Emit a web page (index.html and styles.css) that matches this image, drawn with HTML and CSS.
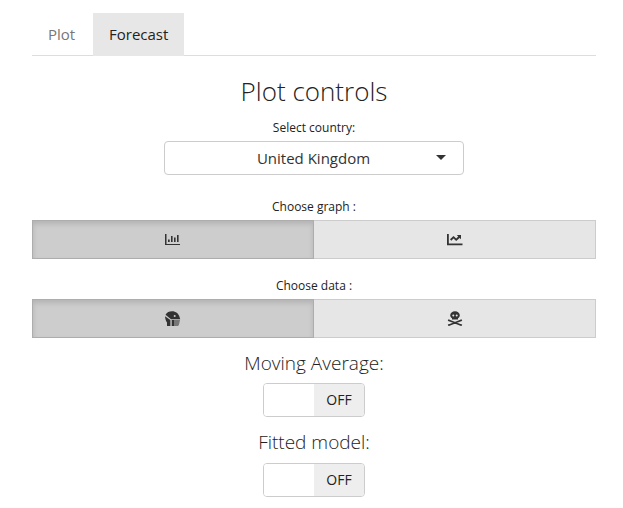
FILE: index.html
```html
<!DOCTYPE html>
<html lang="en">
<head>
<meta charset="utf-8">
<title>Forecast</title>
<link rel="stylesheet" href="styles.css">
</head>
<body>
<nav class="tabs"><a class="tab">Plot</a><a class="tab active">Forecast</a></nav>
<main class="panel">
  <h3 class="title">Plot controls</h3>
  <div class="label">Select country:</div>
  <div class="select"><span class="value">United Kingdom</span><svg class="caret" width="10" height="5" viewBox="0 0 10 5"><path d="M0 0h10L5 5z"/></svg></div>
  <div class="label graph-label">Choose graph :</div>
  <div class="group">
    <button class="choice on"><svg class="icon" width="16" height="16" viewBox="0 0 16 16"><path d="M0 2h1.5v10H15v1H0zM3 7.5h1.7V10H3zM6 4h1.6v6H6zM9 5.5h1.6V10H9zM12 3h1.6v7H12z"/></svg></button>
    <button class="choice"><svg class="icon" width="16" height="16" viewBox="0 0 16 16"><path d="M0 2h1.8v9.5H15.5v1.7H0zM9.8 3H14v4.2l-1.4-1.3-3.4 3.2-2.7-2.6-2.2 2.2-1.3-1.4 3.5-3.3 2.7 2.5 2-1.9z"/></svg></button>
  </div>
  <div class="label data-label">Choose data :</div>
  <div class="group">
    <button class="choice on"><svg class="icon" width="16" height="16" viewBox="0 0 16 16"><path fill-rule="evenodd" d="M0 5.2 5.4 9v6H2v-3.6C.8 10 .2 7.6 0 5.2zM.5 3.7C1.8 1.4 4.2.3 7 .3c4 0 6.4 2.3 7.4 5.3l.8 2.6H6zM8.7 5a1 1 0 1 0 2 0 1 1 0 0 0-2 0zM6.7 9H9v6H6.7z"/><path class="mask" d="M9 9h6l-1 4.5c-.3 1-1 1.5-2 1.5H9z"/></svg></button>
    <button class="choice"><svg class="icon" width="16" height="16" viewBox="0 0 16 16"><path fill-rule="evenodd" d="M8 .2c2.7 0 4.8 1.7 4.8 4 0 1.4-.8 2.3-1.8 3v1.3H5V7.2c-1-.7-1.8-1.6-1.8-3 0-2.3 2.1-4 4.8-4zM5.3 4.6a1 1 0 1 0 2 0 1 1 0 0 0-2 0zm3.4 0a1 1 0 1 0 2 0 1 1 0 0 0-2 0z"/><path class="bones" d="m1.7 9.2 12.6 5M14.3 9.2l-12.6 5M2.2 8.5l-.7 1.6M13.8 8.5l.7 1.6M1.5 13.2l.7 1.6M14.5 13.2l-.7 1.6"/></svg></button>
  </div>
  <h4 class="switch-title">Moving Average:</h4>
  <div class="switch"><span class="handle"></span><span class="off">OFF</span></div>
  <h4 class="switch-title">Fitted model:</h4>
  <div class="switch last"><span class="handle"></span><span class="off">OFF</span></div>
</main>
</body>
</html>
```
FILE: styles.css
```css
* { box-sizing: border-box; }
body {
  margin: 0;
  padding: 13px 27px 0 32px;
  background: #fff;
  color: #222;
  font-family: "Open Sans", sans-serif;
  font-size: 15px;
}
.tabs { display: flex; height: 43px; border-bottom: 1px solid #ddd; }
.tab { padding: 0 16px; line-height: 43px; height: 42px; font-size: 15px; color: #777; }
.tab.active { margin-left: 2px; padding: 0; width: 91px; text-align: center; background: #e7e7e7; color: #222; height: 43px; }
.panel { display: flex; flex-direction: column; align-items: center; }
.title { margin: 17px 0 1px; font-size: 26px; font-weight: 300; line-height: 36px; }
.label { margin-top: 9px; font-size: 12px; line-height: 18px; color: #222; }
.select {
  display: flex;
  align-items: center;
  width: 300px;
  height: 34px;
  margin-top: 4px;
  padding: 0 17px 0 26px;
  border: 1px solid #ccc;
  border-radius: 4px;
  color: #333;
}
.value { flex: 1; text-align: center; }
.caret { fill: #333; margin-bottom: 2px; }
.graph-label { margin-top: 23px; }
.data-label { margin-top: 18px; }
.group { display: flex; width: 100%; height: 39px; margin-top: 4px; }
.choice {
  display: flex;
  align-items: center;
  justify-content: center;
  flex: 0 0 50%;
  padding: 0;
  border: 1px solid #ccc;
  border-left: 0;
  background: #e6e6e6;
}
.choice.on {
  border: 1px solid #adadad;
  background: #cdcdcd;
  box-shadow: inset 0 3px 5px rgba(0, 0, 0, .125);
}
.icon { fill: #333; }
.mask { fill: #777; }
.bones { stroke: #333; stroke-width: 1.6; fill: none; }
.switch-title { margin: 13px 0 0; font-size: 19px; font-weight: 300; line-height: 25px; }
.switch {
  display: flex;
  width: 102px;
  height: 34px;
  margin-top: 7px;
  border: 1px solid #ccc;
  border-radius: 4px;
  overflow: hidden;
}
.switch.last { margin-top: 8px; }
.handle { flex: 1; background: #fff; }
.off { flex: 1; background: #eee; text-align: center; font-size: 14px; line-height: 32px; }
```
